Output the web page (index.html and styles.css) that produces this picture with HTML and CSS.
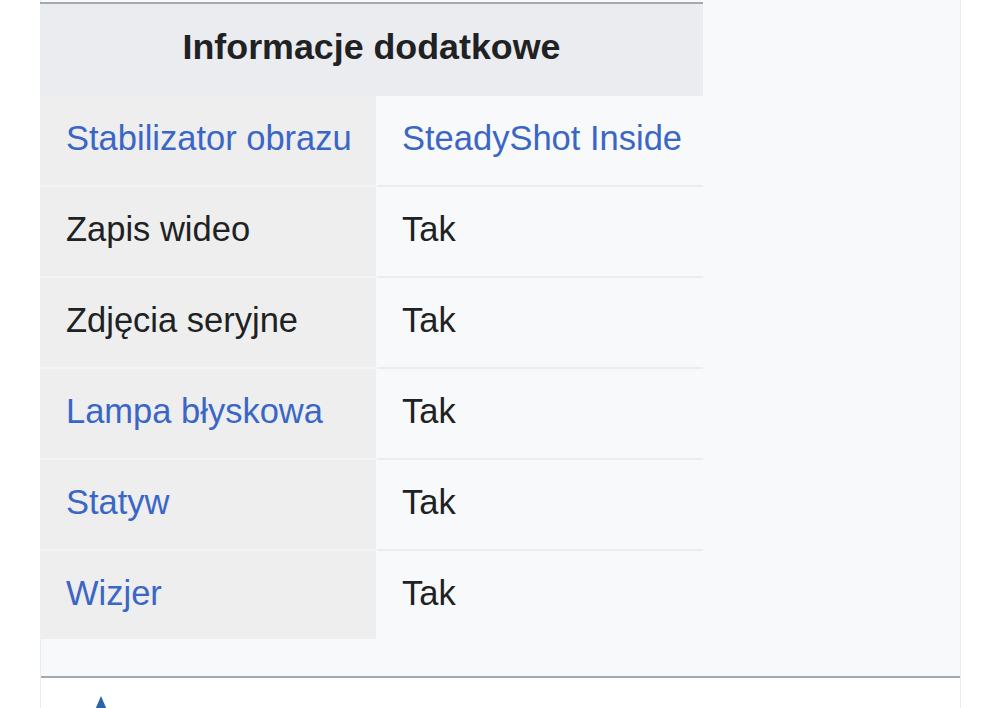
FILE: index.html
```html
<!DOCTYPE html>
<html lang="pl">
<head>
<meta charset="utf-8">
<title>Informacje dodatkowe</title>
<link rel="stylesheet" href="styles.css">
</head>
<body>
<div class="page">
  <section class="infobox-wrap">
    <div class="infobox">
      <div class="infobox-header">Informacje dodatkowe</div>
      <div class="row">
        <div class="label"><a href="#">Stabilizator obrazu</a></div>
        <div class="value"><a href="#">SteadyShot Inside</a></div>
      </div>
      <div class="row">
        <div class="label">Zapis wideo</div>
        <div class="value">Tak</div>
      </div>
      <div class="row">
        <div class="label">Zdjęcia seryjne</div>
        <div class="value">Tak</div>
      </div>
      <div class="row">
        <div class="label"><a href="#">Lampa błyskowa</a></div>
        <div class="value">Tak</div>
      </div>
      <div class="row">
        <div class="label"><a href="#">Statyw</a></div>
        <div class="value">Tak</div>
      </div>
      <div class="row last">
        <div class="label"><a href="#">Wizjer</a></div>
        <div class="value">Tak</div>
      </div>
    </div>
  </section>
  <footer class="footer">
    <svg class="up-icon" width="14" height="14" viewBox="0 0 14 14" aria-hidden="true">
      <polygon points="7,0 1,14 13,14" fill="#2b64a6"/>
    </svg>
  </footer>
</div>
</body>
</html>
```

FILE: styles.css
```css
html, body {
  margin: 0;
  padding: 0;
  background: #ffffff;
}

body {
  font-family: "Liberation Sans", Arial, sans-serif;
  color: #202122;
  height: 708px;
  overflow: hidden;
}

.page {
  margin-left: 40px;
  width: 921px;
  border-left: 1px solid #eaecf0;
  border-right: 1px solid #eaecf0;
  min-height: 708px;
  box-sizing: border-box;
}

.infobox-wrap {
  background: #f8f9fa;
  padding-top: 2px;
  padding-bottom: 37px;
  border-bottom: 2px solid #a2a9b1;
}

.infobox {
  width: 663px;
  margin-left: -1px;
  border-top: 2px solid #a2a9b1;
}

.infobox-header {
  background: #eaecf0;
  height: 92px;
  box-sizing: border-box;
  padding-top: 24px;
  text-align: center;
  font-weight: bold;
  font-size: 35.8px;
  line-height: 39px;
}

.row {
  display: flex;
  font-size: 34.5px;
  line-height: 39px;
}

.label {
  width: 336px;
  flex: none;
  box-sizing: border-box;
  height: 91px;
  padding: 23px 0 0 26px;
  background: #eeeeef;
  border-bottom: 2px solid #f3f3f4;
  margin-right: 1px;
}

.value {
  flex: 1;
  box-sizing: border-box;
  height: 91px;
  padding: 23px 0 0 25px;
  background: #f8f9fa;
  border-bottom: 2px solid #eaecf0;
}

.row.last .label,
.row.last .value {
  border-bottom: none;
  height: 88px;
}

.row a {
  color: #3a66c6;
  text-decoration: none;
}

.footer {
  background: #ffffff;
  height: 40px;
  padding-top: 18px;
  padding-left: 53px;
}

.up-icon {
  display: block;
}
```
